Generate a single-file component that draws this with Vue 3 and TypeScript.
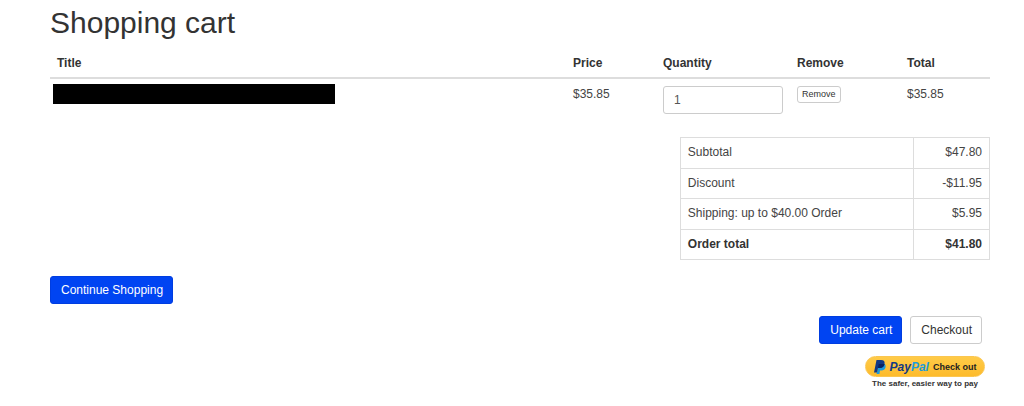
<script setup lang="ts">
import { ref } from 'vue'

interface SummaryLine {
  label: string
  amount: string
  strong?: boolean
}

const quantity = ref('1')

const summary: SummaryLine[] = [
  { label: 'Subtotal', amount: '$47.80' },
  { label: 'Discount', amount: '-$11.95' },
  { label: 'Shipping: up to $40.00 Order', amount: '$5.95' },
  { label: 'Order total', amount: '$41.80', strong: true },
]
</script>

<template>
  <main class="page">
    <h1>Shopping cart</h1>
    <form @submit.prevent>
      <table class="cart">
        <colgroup>
          <col />
          <col class="col-price" />
          <col class="col-quantity" />
          <col class="col-remove" />
          <col class="col-total" />
        </colgroup>
        <thead>
          <tr>
            <th scope="col">Title</th>
            <th scope="col">Price</th>
            <th scope="col" id="quantity-label">Quantity</th>
            <th scope="col">Remove</th>
            <th scope="col">Total</th>
          </tr>
        </thead>
        <tbody>
          <tr>
            <td class="title-cell"><div class="redacted"></div></td>
            <td>$35.85</td>
            <td class="control-cell">
              <input v-model="quantity" class="quantity" type="text" aria-labelledby="quantity-label" />
            </td>
            <td class="control-cell"><button type="button" class="btn btn-small">Remove</button></td>
            <td>$35.85</td>
          </tr>
        </tbody>
      </table>

      <table class="summary">
        <tbody>
          <tr v-for="line in summary" :key="line.label" :class="{ strong: line.strong }">
            <th scope="row">{{ line.label }}</th>
            <td>{{ line.amount }}</td>
          </tr>
        </tbody>
      </table>

      <div class="continue">
        <a href="#" class="btn btn-primary">Continue Shopping</a>
      </div>

      <div class="actions">
        <button type="submit" class="btn btn-primary">Update cart</button>
        <button type="button" class="btn">Checkout</button>
      </div>

      <div class="paypal">
        <button type="button" class="paypal-button">
          <svg class="mark" viewBox="0 0 24 28" aria-hidden="true">
            <path fill="#1d9bdb" d="M10 8h11.500c2 2 2 4 1.500 7-1 4-4 6-8 6h-3l-1.200 7H5z" />
            <path fill="#123984" d="M5 0h9c6 0 8 3 7 8-1 5-4 8-10 8H8L6 25H0z" />
            <path fill="#0b2260" d="M9.500 8h11.500c-1 5-4 8-10 8H8z" />
          </svg>
          <span class="wordmark"><span class="pay">Pay</span><span class="pal">Pal</span></span>
          <span>Check out</span>
        </button>
        <small>The safer, easier way to pay</small>
      </div>
    </form>
  </main>
</template>

<style>
body {
  margin: 0;
  background: #fff;
}
</style>

<style scoped>
.page {
  box-sizing: border-box;
  padding: 5px 34px 0 50px;
  font-family: "Liberation Sans", Arial, sans-serif;
  font-size: 12px;
  line-height: 18px;
  color: #444;
}

h1 {
  margin: 0 0 9px;
  font-size: 30px;
  line-height: 36px;
  font-weight: 400;
  color: #333;
}

table {
  border-collapse: collapse;
}

.cart {
  width: 100%;
  table-layout: fixed;
}

.col-price,
.col-total {
  width: 90px;
}

.col-quantity {
  width: 134px;
}

.col-remove {
  width: 110px;
}

.cart th {
  padding: 4px 7px 5px;
  text-align: left;
  color: #333;
  border-bottom: 2px solid #ddd;
}

.cart td {
  padding: 6px 7px 0;
  vertical-align: top;
}

.cart .title-cell {
  padding: 5px 3px 0;
}

.cart .control-cell {
  padding-top: 7px;
}

.redacted {
  width: 282px;
  height: 20px;
  background: #000;
}

.quantity {
  display: block;
  box-sizing: border-box;
  width: 100%;
  height: 28px;
  padding: 0 10px;
  font: inherit;
  color: #555;
  background: #fff;
  border: 1px solid #ccc;
  border-radius: 3px;
}

.btn {
  display: block;
  box-sizing: border-box;
  padding: 4px 9px 4px 10px;
  font: inherit;
  color: #333;
  text-decoration: none;
  white-space: nowrap;
  background: #fff;
  border: 1px solid #ccc;
  border-radius: 3px;
  cursor: pointer;
}

.btn-primary {
  color: #fff;
  background: #0044f2;
  border-color: #003de0;
}

.btn-small {
  padding: 0 4px;
  font-size: 9px;
  line-height: 15px;
}

.summary {
  width: 33%;
  height: 123px;
  margin: 23px 0 0 auto;
  line-height: 17px;
}

.summary th,
.summary td {
  padding: 6px 7px;
  border: 1px solid #ddd;
}

.summary th {
  text-align: left;
  font-weight: 400;
}

.summary td {
  width: 61px;
  text-align: right;
}

.summary .strong > * {
  font-weight: 700;
  color: #333;
}

.continue {
  display: flex;
  margin-top: 16px;
}

.actions {
  display: flex;
  justify-content: flex-end;
  gap: 8px;
  margin: 12px 8px 0 0;
}

.paypal {
  display: flex;
  flex-direction: column;
  align-items: center;
  width: 120px;
  margin: 12px 5px 0 auto;
}

.paypal-button {
  display: flex;
  align-items: center;
  justify-content: center;
  gap: 4px;
  width: 100%;
  height: 21px;
  padding: 0;
  font: 700 9px/20px "Liberation Sans", Arial, sans-serif;
  color: #222;
  white-space: nowrap;
  background: linear-gradient(#ffcb48, #fdbb2c);
  border: 1px solid #fbc650;
  border-radius: 11px;
  cursor: pointer;
}

.mark {
  width: 12px;
  height: 14px;
}

.wordmark {
  font-size: 12px;
  font-style: italic;
}

.pay {
  color: #123984;
}

.pal {
  color: #1d9bdb;
}

.paypal small {
  margin-top: 2px;
  font-size: 8px;
  line-height: 10px;
  font-weight: 700;
  color: #333;
  white-space: nowrap;
}
</style>
